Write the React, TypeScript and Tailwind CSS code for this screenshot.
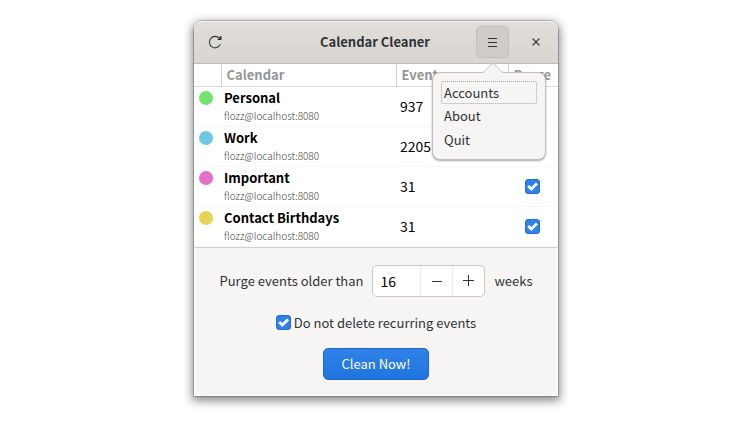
import { useState } from 'react'

const CALENDARS = [
  { name: 'Personal', account: 'flozz@localhost:8080', events: 937, dot: 'bg-[#73e36d]' },
  { name: 'Work', account: 'flozz@localhost:8080', events: 2205, dot: 'bg-[#6dc8e6]' },
  { name: 'Important', account: 'flozz@localhost:8080', events: 31, dot: 'bg-[#e66dc8]' },
  { name: 'Contact Birthdays', account: 'flozz@localhost:8080', events: 31, dot: 'bg-[#e6d552]' },
]

const MENU_ITEMS = ['Accounts', 'About', 'Quit']

function CheckBox({ id, label }: { id: string; label?: string }) {
  return (
    <span className="relative block size-[15px] shrink-0">
      <input
        id={id}
        type="checkbox"
        defaultChecked
        aria-label={label}
        className="peer block size-[15px] appearance-none rounded-[3px] border border-[#cdc7c2] bg-white checked:border-[#2470d0] checked:bg-[#2f80e8]"
      />
      <svg
        viewBox="0 0 15 15"
        className="pointer-events-none absolute inset-0 hidden size-[15px] peer-checked:block"
        aria-hidden="true"
      >
        <path d="M3.2 7 6.3 10 12 4.4" fill="none" stroke="#fff" strokeWidth="2.8" />
      </svg>
    </span>
  )
}

function AppMenu() {
  const [open, setOpen] = useState(true)

  return (
    <div className="relative">
      <button
        type="button"
        aria-label="Menu"
        aria-expanded={open}
        onClick={() => setOpen((v) => !v)}
        className="flex h-8 w-[33px] items-center justify-center rounded-[5px] border border-[#c5bfb9] bg-[#d1ccc7]"
      >
        <svg viewBox="0 0 9 9" className="size-[9px]" aria-hidden="true">
          <path d="M0 .5h9M0 4.5h9M0 8.5h9" stroke="#2e3436" />
        </svg>
      </button>

      {open && (
        <div
          role="menu"
          className="absolute top-[46px] -left-[44px] z-10 flex w-[114px] flex-col rounded-lg border border-[#c4bfba] bg-[#f6f5f4] px-2 pt-2 pb-[7px] shadow-[0_1px_2px_rgba(0,0,0,0.35)]"
        >
          <svg viewBox="0 0 20 11" className="absolute -top-[11px] left-[50px] h-[11px] w-5" aria-hidden="true">
            <path d="M0 11 10 1 20 11Z" fill="#f6f5f4" />
            <path d="M0 10.5 10 .8 20 10.5" fill="none" stroke="#c4bfba" />
          </svg>
          {MENU_ITEMS.map((item, i) => (
            <button
              key={item}
              type="button"
              role="menuitem"
              className={`rounded-xs text-left leading-5 ${
                i === 0 ? 'h-[23px] border border-dotted border-[#a5a5a4] px-0.5' : 'h-6 px-[3px]'
              }`}
            >
              {item}
            </button>
          ))}
        </div>
      )}
    </div>
  )
}

function CalendarTable() {
  return (
    <table className="w-full table-fixed border-collapse bg-white text-black">
      <colgroup>
        <col className="w-[27px]" />
        <col />
        <col className="w-28" />
        <col className="w-[50px]" />
      </colgroup>
      <thead>
        <tr className="h-[22px] border-b border-[#dfdad5] text-left leading-5 text-[#949697]">
          <th aria-label="Color" />
          <th className="border-l border-[#d5d0cc] pl-[5px]">Calendar</th>
          <th className="border-l border-[#d5d0cc] pl-[5px]">Events</th>
          <th className="border-l border-[#d5d0cc] pl-[5px]">Purge</th>
        </tr>
      </thead>
      <tbody>
        {CALENDARS.map((c) => (
          <tr key={c.name} className="h-10 border-b border-[#f7f7f7]">
            <td className="pt-1 pl-[5px] align-top">
              <span className={`block size-3.5 rounded-full ${c.dot}`} />
            </td>
            <td className="pl-[3px]">
              <div className="leading-5 font-bold">{c.name}</div>
              <div className="text-[10px] leading-4 font-light text-[#444]">{c.account}</div>
            </td>
            <td className="pl-1 text-sm">{c.events}</td>
            <td className="pl-[17px]">
              <CheckBox id={`purge-${c.name}`} label={`Purge ${c.name}`} />
            </td>
          </tr>
        ))}
      </tbody>
    </table>
  )
}

export default function App() {
  const [weeks, setWeeks] = useState('16')
  const step = (n: number) => setWeeks((w) => String(Math.max(0, Number(w) + n)))

  return (
    <main className="flex min-h-screen items-start justify-center bg-white pt-[21px] font-['Noto_Sans_CJK_SC','Noto_Sans',sans-serif] text-[13px] text-[#2e3436]">
      <div className="w-full max-w-[364px] rounded-t-lg bg-[#f6f5f4] shadow-[0_0_0_1px_rgba(0,0,0,0.2),0_3px_10px_2px_rgba(0,0,0,0.45)]">
        <header className="grid h-[43px] grid-cols-[1fr_auto_1fr] items-center rounded-t-lg border-b border-[#c4bdb7] bg-linear-to-b from-[#e1deda] to-[#d9d5d1] pr-[7px] pl-[5px] shadow-[inset_0_1px_0_#f5f4f2]">
          <button type="button" aria-label="Refresh" className="flex size-8 items-center justify-center">
            <svg viewBox="0 0 14 14" className="size-3.5" aria-hidden="true">
              <path d="M11.5 3.5A5.7 5.7 0 1 0 12.3 9.4" fill="none" stroke="#2e3436" strokeWidth="1.1" />
              <path d="M13.5 1V5H9.6V4L11 3.4 12.3 1Z" fill="#2e3436" />
            </svg>
          </button>
          <h1 className="font-bold">Calendar Cleaner</h1>
          <div className="flex items-center justify-end gap-3">
            <AppMenu />
            <button type="button" aria-label="Close" className="flex h-8 w-[30px] items-center justify-center">
              <svg viewBox="0 0 8 8" className="size-2" aria-hidden="true">
                <path d="M.6.6 7.4 7.4M7.4.6.6 7.4" stroke="#2e3436" strokeWidth="1.3" />
              </svg>
            </button>
          </div>
        </header>

        <CalendarTable />

        <form
          className="flex flex-col items-center border border-white border-t-[#d5d0cb] pt-[17px] pb-[15px]"
          onSubmit={(e) => e.preventDefault()}
        >
          <div className="flex items-center gap-[9px]">
            <label htmlFor="weeks">Purge events older than</label>
            <div className="flex h-8 w-[113px] overflow-hidden rounded-[5px] border border-[#cdc7c2] bg-white">
              <input
                id="weeks"
                value={weeks}
                onChange={(e) => setWeeks(e.target.value)}
                className="min-w-0 flex-1 pl-[7px] text-sm text-black outline-none"
              />
              <button
                type="button"
                aria-label="Decrease"
                onClick={() => step(-1)}
                className="flex w-8 items-center justify-center border-l border-[#eeebe9]"
              >
                <svg viewBox="0 0 10 10" className="size-[10px]" aria-hidden="true">
                  <path d="M0 5.5h10" stroke="#2e3436" />
                </svg>
              </button>
              <button
                type="button"
                aria-label="Increase"
                onClick={() => step(1)}
                className="flex w-8 items-center justify-center border-l border-[#eeebe9]"
              >
                <svg viewBox="0 0 11 11" className="size-[11px]" aria-hidden="true">
                  <path d="M0 5.5h11M5.5 0v11" stroke="#2e3436" />
                </svg>
              </button>
            </div>
            <span>weeks</span>
          </div>

          <div className="mt-4 flex items-center gap-[3px]">
            <CheckBox id="recurring" />
            <label htmlFor="recurring">Do not delete recurring events</label>
          </div>

          <button
            type="submit"
            className="mt-4 h-8 w-[106px] rounded-[5px] border border-[#1b6acb] bg-linear-to-b from-[#2f82e6] to-[#1f74e0] text-white"
          >
            Clean Now!
          </button>
        </form>
      </div>
    </main>
  )
}
